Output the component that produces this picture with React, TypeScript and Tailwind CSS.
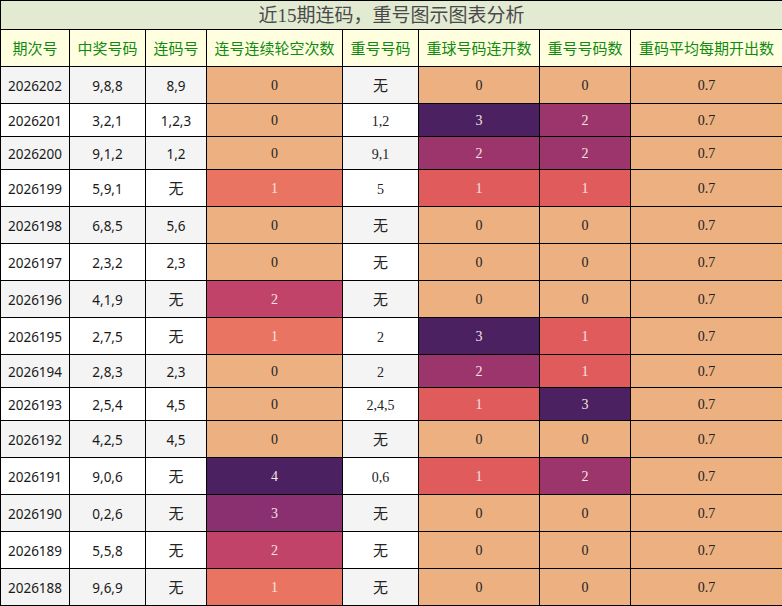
import React from "react";

type Row = {
  issue: string;
  draw: string;
  lian: string;
  gap: number;
  repeat: string;
  streak: number;
  count: number;
};

const rows: Row[] = [
  { issue: "2026202", draw: "9,8,8", lian: "8,9", gap: 0, repeat: "无", streak: 0, count: 0 },
  { issue: "2026201", draw: "3,2,1", lian: "1,2,3", gap: 0, repeat: "1,2", streak: 3, count: 2 },
  { issue: "2026200", draw: "9,1,2", lian: "1,2", gap: 0, repeat: "9,1", streak: 2, count: 2 },
  { issue: "2026199", draw: "5,9,1", lian: "无", gap: 1, repeat: "5", streak: 1, count: 1 },
  { issue: "2026198", draw: "6,8,5", lian: "5,6", gap: 0, repeat: "无", streak: 0, count: 0 },
  { issue: "2026197", draw: "2,3,2", lian: "2,3", gap: 0, repeat: "无", streak: 0, count: 0 },
  { issue: "2026196", draw: "4,1,9", lian: "无", gap: 2, repeat: "无", streak: 0, count: 0 },
  { issue: "2026195", draw: "2,7,5", lian: "无", gap: 1, repeat: "2", streak: 3, count: 1 },
  { issue: "2026194", draw: "2,8,3", lian: "2,3", gap: 0, repeat: "2", streak: 2, count: 1 },
  { issue: "2026193", draw: "2,5,4", lian: "4,5", gap: 0, repeat: "2,4,5", streak: 1, count: 3 },
  { issue: "2026192", draw: "4,2,5", lian: "4,5", gap: 0, repeat: "无", streak: 0, count: 0 },
  { issue: "2026191", draw: "9,0,6", lian: "无", gap: 4, repeat: "0,6", streak: 1, count: 2 },
  { issue: "2026190", draw: "0,2,6", lian: "无", gap: 3, repeat: "无", streak: 0, count: 0 },
  { issue: "2026189", draw: "5,5,8", lian: "无", gap: 2, repeat: "无", streak: 0, count: 0 },
  { issue: "2026188", draw: "9,6,9", lian: "无", gap: 1, repeat: "无", streak: 0, count: 0 },
];

// colour scale for the 轮空 column (max 4)
const gapColor: Record<number, string> = {
  0: "bg-[#edb081] text-[#222]",
  1: "bg-[#e87461] text-[#f6e4e0]",
  2: "bg-[#c2436a] text-[#f6e4e0]",
  3: "bg-[#8a2f70] text-[#f6e4e0]",
  4: "bg-[#4b2162] text-[#f6e4e0]",
};

// colour scale for the 重号 columns (max 3)
const repColor: Record<number, string> = {
  0: "bg-[#edb081] text-[#222]",
  1: "bg-[#e05c5c] text-[#f6e4e0]",
  2: "bg-[#9b356c] text-[#f6e4e0]",
  3: "bg-[#4b2162] text-[#f6e4e0]",
};

const headers = ["期次号", "中奖号码", "连码号", "连号连续轮空次数", "重号号码", "重球号码连开数", "重号号码数", "重码平均每期开出数"];

const cell = "border border-black text-center p-0";
const serif = "font-['Liberation_Serif','Noto_Sans_CJK_SC',serif] text-[14px]";
const sans = "font-['Noto_Sans','Noto_Sans_CJK_SC',sans-serif] text-[13.5px] leading-none text-[#1a1a1a]";
const cjk = "font-['Noto_Sans_CJK_SC',sans-serif] text-[15px]";

function Text({ v, base }: { v: string; base: string }) {
  return <span className={v === "无" ? cjk : base}>{v}</span>;
}

export default function App() {
  return (
    <div className="w-[782px] h-[606px] bg-white">
      <table className="w-[782px] table-fixed border-collapse text-[#222]">
        <colgroup>
          <col className="w-[69px]" />
          <col className="w-[76px]" />
          <col className="w-[61px]" />
          <col className="w-[136px]" />
          <col className="w-[76px]" />
          <col className="w-[121px]" />
          <col className="w-[91px]" />
          <col className="w-[152px]" />
        </colgroup>
        <thead>
          <tr className="h-[29px]">
            <th
              colSpan={8}
              className={`${cell} bg-[#e2ebd2] font-normal text-[#4a4a4a] text-[19px] leading-none font-['Liberation_Serif','Noto_Sans_CJK_SC',serif]`}
            >
              近15期连码，重号图示图表分析
            </th>
          </tr>
          <tr className="h-[37px]">
            {headers.map((h) => (
              <th
                key={h}
                className={`${cell} bg-[#ffffe0] font-normal text-[#108a10] text-[15px] font-['Noto_Sans_CJK_SC',sans-serif]`}
              >
                {h}
              </th>
            ))}
          </tr>
        </thead>
        <tbody>
          {rows.map((r, i) => {
            const tall = r.lian === "无" || r.repeat === "无";
            const stripe = i % 2 === 0 ? "bg-[#f4f4f4]" : "bg-white";
            return (
              <tr key={r.issue} className={tall ? "h-[37px]" : "h-[33px]"}>
                <td className={`${cell} ${stripe}`}>
                  <span className={sans}>{r.issue}</span>
                </td>
                <td className={`${cell} ${stripe}`}>
                  <span className={sans}>{r.draw}</span>
                </td>
                <td className={`${cell} ${stripe}`}>
                  <Text v={r.lian} base={sans} />
                </td>
                <td className={`${cell} ${serif} ${gapColor[r.gap]}`}>{r.gap}</td>
                <td className={`${cell} ${stripe}`}>
                  <Text v={r.repeat} base={serif} />
                </td>
                <td className={`${cell} ${serif} ${repColor[r.streak]}`}>{r.streak}</td>
                <td className={`${cell} ${serif} ${repColor[r.count]}`}>{r.count}</td>
                <td className={`${cell} ${serif} bg-[#edb081] text-[#222]`}>0.7</td>
              </tr>
            );
          })}
        </tbody>
      </table>
    </div>
  );
}
